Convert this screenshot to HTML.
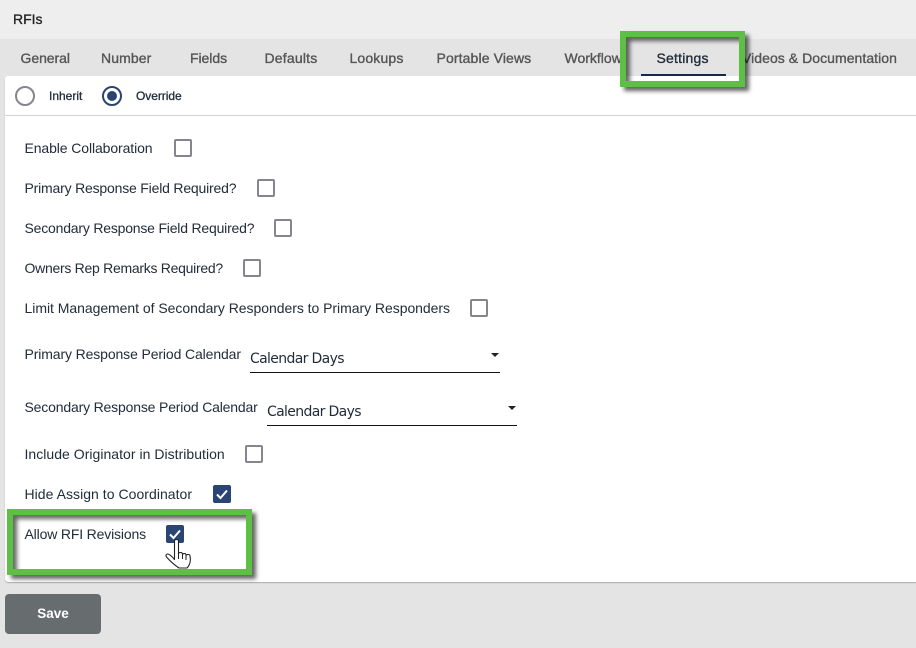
<!DOCTYPE html>
<html><head><meta charset="utf-8"><style>
html,body{margin:0;padding:0;width:916px;height:648px;overflow:hidden;background:#e4e4e4;font-family:"Liberation Sans",sans-serif}
div,span{position:absolute;white-space:nowrap}
.t{font-size:14px;line-height:18px;top:49px;color:#555;-webkit-text-stroke:.35px #555}
.l{font-size:14px;line-height:18px;left:24.5px;color:#222d3a}
.c{width:14px;height:14px;border:2px solid #85858f;border-radius:2px;background:#fff}
.k{width:18px;height:18px;border-radius:2px;background:#2a4574}
.s{font-size:14px;line-height:20px;color:#222d3a;font-family:"DejaVu Sans",sans-serif;letter-spacing:-.65px}
.u{height:1px;background:#111}
.a{width:0;height:0;border-left:4.5px solid transparent;border-right:4.5px solid transparent;border-top:4.5px solid #222}
.g{border:6px solid #5dc045;box-shadow:4px 4px 4px rgba(0,0,0,.6),inset 4px 4px 4px rgba(0,0,0,.6);box-sizing:border-box}
</style></head><body>
<div style="left:0;top:0;width:916px;height:39px;background:#eeeeee"></div>
<div style="left:13px;top:10px;font-size:14px;line-height:18px;color:#222;-webkit-text-stroke:.3px #222">RFIs</div>
<div class="t" style="left:20.500px;letter-spacing:-.05px">General</div>
<div class="t" style="left:101px;letter-spacing:.1px">Number</div>
<div class="t" style="left:190px;letter-spacing:-.05px">Fields</div>
<div class="t" style="left:264.500px;letter-spacing:.2px">Defaults</div>
<div class="t" style="left:349.500px;letter-spacing:.15px">Lookups</div>
<div class="t" style="left:436.500px;letter-spacing:.12px">Portable Views</div>
<div class="t" style="left:564.500px">Workflow</div>
<div class="t" style="left:742px;letter-spacing:.05px">Videos &amp; Documentation</div>
<div style="left:5px;top:76px;width:911px;height:506px;background:#fff;border-radius:3px 0 0 3px;box-shadow:0 1px 1px rgba(0,0,0,.25)"></div>
<div class="t" style="left:656.500px;color:#222d3a;-webkit-text-stroke:.35px #222d3a;letter-spacing:.2px">Settings</div>
<div style="left:641px;top:74px;width:85px;height:2px;background:#16294a"></div>
<div style="left:5px;top:115px;width:911px;height:1px;background:#d2d2d2"></div>
<div style="left:15px;top:86px;width:16px;height:16px;border:2px solid #85858f;border-radius:50%"></div>
<div style="left:49px;top:87px;font-size:12px;line-height:18px;color:#222d3a;-webkit-text-stroke:.3px #222d3a">Inherit</div>
<div style="left:102px;top:86px;width:16px;height:16px;border:2px solid #2a4574;border-radius:50%"></div>
<div style="left:107px;top:91px;width:10px;height:10px;background:#2a4574;border-radius:50%"></div>
<div style="left:136px;top:87px;font-size:12px;line-height:18px;color:#222d3a;-webkit-text-stroke:.3px #222d3a;letter-spacing:-.05px">Override</div>

<div class="l" style="top:139px;letter-spacing:-.1px">Enable Collaboration</div><div class="c" style="left:174px;top:139px"></div>
<div class="l" style="top:179px;letter-spacing:-.19px">Primary Response Field Required?</div><div class="c" style="left:257px;top:179px"></div>
<div class="l" style="top:219px;letter-spacing:-.2px">Secondary Response Field Required?</div><div class="c" style="left:274px;top:219px"></div>
<div class="l" style="top:259px;letter-spacing:-.28px">Owners Rep Remarks Required?</div><div class="c" style="left:243px;top:259px"></div>
<div class="l" style="top:299px;letter-spacing:-.04px">Limit Management of Secondary Responders to Primary Responders</div><div class="c" style="left:470px;top:299px"></div>

<div class="l" style="top:345px;letter-spacing:-.12px">Primary Response Period Calendar</div>
<div class="s" style="left:250px;top:349px">Calendar Days</div>
<div class="a" style="left:491px;top:353px"></div>
<div class="u" style="left:250px;top:372px;width:250px"></div>

<div class="l" style="top:398px;letter-spacing:-.17px">Secondary Response Period Calendar</div>
<div class="s" style="left:267px;top:402px">Calendar Days</div>
<div class="a" style="left:508px;top:406px"></div>
<div class="u" style="left:267px;top:425px;width:250px"></div>

<div class="l" style="top:445px;letter-spacing:.03px">Include Originator in Distribution</div><div class="c" style="left:245px;top:445px"></div>
<div class="l" style="top:485px;letter-spacing:.04px">Hide Assign to Coordinator</div>
<div class="k" style="left:213px;top:485px"><svg width="18" height="18" style="position:absolute;left:0;top:0"><path d="M4 9.500l3.500 3.500L14 5.500" fill="none" stroke="#fff" stroke-width="2"/></svg></div>
<div class="l" style="top:525px;letter-spacing:-.16px">Allow RFI Revisions</div>
<div class="k" style="left:166px;top:525px"><svg width="18" height="18" style="position:absolute;left:0;top:0"><path d="M4 9.500l3.500 3.500L14 5.500" fill="none" stroke="#fff" stroke-width="2"/></svg></div>
<svg width="36" height="40" style="position:absolute;left:160px;top:535px"><path d="M14.500 6c0-2 4-2 4 0v13c0-2 4-2 4 0v1c0-2 3.500-2 3.500 0v1c0-2 4-2 4 0 .5 3 .5 6-.5 8-.5 2-1.500 3-2.500 4h-8c-3-2-9-7-12.500-11-1-1.500-.5-3 1-3 2 0 5 3 7 5.500z" fill="#fff" stroke="#222" stroke-width="1.100" stroke-linejoin="round"/><path d="M18.500 19v5M22.500 20v4M26 21v4" stroke="#222" stroke-width="1" fill="none"/></svg>

<div class="g" style="left:620px;top:31px;width:125px;height:56px"></div>
<div class="g" style="left:7px;top:509px;width:245px;height:66px"></div>

<div style="left:5px;top:594px;width:96px;height:40px;background:#676d6e;border-radius:4px;color:#fff;font-size:13.500px;font-weight:bold;line-height:40px;text-align:center">Save</div>
</body></html>
